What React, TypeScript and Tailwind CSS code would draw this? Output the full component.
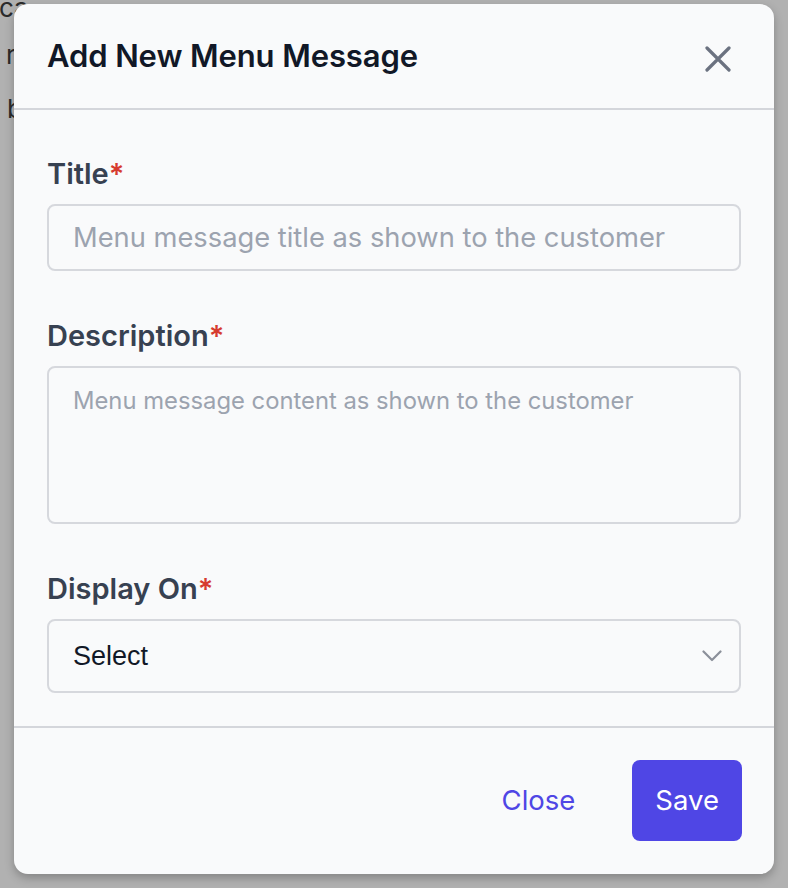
import React, { useState } from 'react';

/**
 * AddMenuMessageModal
 * Dialog for creating a new menu message, shown over the dimmed page
 */
const Label: React.FC<{ text: string }> = ({ text }) => (
  <label className="block text-[29px] leading-[43px] font-semibold text-[#374151] mb-[9px]">
    {text}
    <span className="text-[#d63b2f]">*</span>
  </label>
);

export default function App() {
  const [title, setTitle] = useState('');
  const [description, setDescription] = useState('');
  const [displayOn, setDisplayOn] = useState('');

  return (
    <div className="relative w-[788px] h-[888px] overflow-hidden bg-[#b1b1b1] font-['Inter',sans-serif]">
      {/* Page behind the overlay */}
      <div className="text-[26px] leading-[44px] text-[#2b2b2b] font-['Inter',sans-serif]">
        <p className="-mt-[14px] -ml-[1px]">ca</p>
        <p className="ml-[6px] mt-[3px]">r</p>
        <p className="ml-[7px] mt-[10px]">b</p>
      </div>

      {/* Overlay + dialog */}
      <div className="absolute inset-0 pt-[4px] pl-[14px]">
        <div className="w-[760px] bg-[#f9fafb] rounded-[14px] shadow-[0_4px_10px_rgba(0,0,0,0.25)]">
          {/* Header */}
          <div className="h-[106px] px-[33px] flex items-center justify-between border-b-2 border-[#d4d6db]">
            <h2 className="text-[31px] font-semibold text-[#111827] tracking-[-0.1px]">
              Add New Menu Message
            </h2>
            <button className="mr-[10px] mt-[6px] text-[#6b7280]">
              <svg width="26" height="26" viewBox="0 0 26 26" fill="none">
                <path
                  d="M2 2 L24 24 M24 2 L2 24"
                  stroke="currentColor"
                  strokeWidth="3.2"
                  strokeLinecap="round"
                />
              </svg>
            </button>
          </div>

          {/* Body */}
          <div className="px-[33px] pt-[42px] pb-[33px] border-b-2 border-[#d4d6db]">
            <Label text="Title" />
            <input
              value={title}
              onChange={(e) => setTitle(e.target.value)}
              placeholder="Menu message title as shown to the customer"
              className="w-full h-[67px] px-[24px] bg-[#f9fafb] border-2 border-[#d6d8dd] rounded-[8px] text-[27.3px] text-[#111827] placeholder:text-[#9ca3af] outline-none"
            />

            <div className="mt-[43px]">
              <Label text="Description" />
              <textarea
                value={description}
                onChange={(e) => setDescription(e.target.value)}
                placeholder="Menu message content as shown to the customer"
                className="block w-full h-[158px] px-[24px] pt-[15px] bg-[#f9fafb] border-2 border-[#d6d8dd] rounded-[8px] text-[23.8px] leading-[36px] text-[#111827] placeholder:text-[#9ca3af] outline-none resize-none"
              />
            </div>

            <div className="mt-[43px]">
              <Label text="Display On" />
              <div className="relative">
                <select
                  value={displayOn}
                  onChange={(e) => setDisplayOn(e.target.value)}
                  className="appearance-none w-full h-[74px] pl-[24px] pr-[60px] bg-[#f9fafb] border-2 border-[#d6d8dd] rounded-[8px] text-[27px] text-[#111827] font-['Liberation_Sans',Arial,sans-serif] outline-none"
                >
                  <option value="">Select</option>
                  <option value="menu">Menu</option>
                  <option value="checkout">Checkout</option>
                </select>
                <svg
                  className="absolute right-[19px] top-[31px] pointer-events-none"
                  width="20"
                  height="12"
                  viewBox="0 0 20 12"
                  fill="none"
                >
                  <path
                    d="M1.5 1.5 L10 10 L18.5 1.5"
                    stroke="#8b909a"
                    strokeWidth="2.2"
                    strokeLinecap="round"
                    strokeLinejoin="round"
                  />
                </svg>
              </div>
            </div>
          </div>

          {/* Footer */}
          <div className="px-[32px] pt-[32px] pb-[33px] flex justify-end items-center gap-[33px]">
            <button className="h-[81px] px-[24px] text-[27.5px] text-[#4f46e5]">Close</button>
            <button className="h-[81px] px-[23px] rounded-[8px] bg-[#4f46e5] text-[27.5px] text-white">
              Save
            </button>
          </div>
        </div>
      </div>
    </div>
  );
}
